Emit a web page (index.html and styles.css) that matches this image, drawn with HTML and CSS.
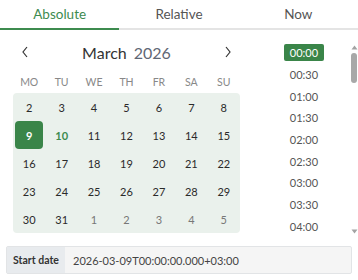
FILE: index.html
```html
<!DOCTYPE html>
<html>
<head>
<meta charset="utf-8">
<link rel="stylesheet" href="styles.css">
</head>
<body>
<div class="picker">
  <div class="tabs">
    <div class="tab active">Absolute</div>
    <div class="tab">Relative</div>
    <div class="tab">Now</div>
  </div>
  <div class="main">
    <div class="cal">
      <div class="cal-head">
        <svg class="arrow" width="6" height="12" viewBox="0 0 6 12"><path d="M5 1 L1 6 L5 11" fill="none" stroke="#333" stroke-width="1.2"/></svg>
        <div class="title"><span class="month">March</span><span class="year">2026</span></div>
        <svg class="arrow" width="6" height="12" viewBox="0 0 6 12"><path d="M1 1 L5 6 L1 11" fill="none" stroke="#333" stroke-width="1.2"/></svg>
      </div>
      <div class="weekdays">
        <span>MO</span><span>TU</span><span>WE</span><span>TH</span><span>FR</span><span>SA</span><span>SU</span>
      </div>
      <div class="days">
        <span>2</span><span>3</span><span>4</span><span>5</span><span>6</span><span>7</span><span>8</span>
        <span class="sel">9</span><span class="today">10</span><span>11</span><span>12</span><span>13</span><span>14</span><span>15</span>
        <span>16</span><span>17</span><span>18</span><span>19</span><span>20</span><span>21</span><span>22</span>
        <span>23</span><span>24</span><span>25</span><span>26</span><span>27</span><span>28</span><span>29</span>
        <span>30</span><span>31</span><span class="other">1</span><span class="other">2</span><span class="other">3</span><span class="other">4</span><span class="other">5</span>
      </div>
    </div>
    <div class="times">
      <div class="time sel"><span>00:00</span></div>
      <div class="time"><span>00:30</span></div>
      <div class="time"><span>01:00</span></div>
      <div class="time"><span>01:30</span></div>
      <div class="time"><span>02:00</span></div>
      <div class="time"><span>02:30</span></div>
      <div class="time"><span>03:00</span></div>
      <div class="time"><span>03:30</span></div>
      <div class="time"><span>04:00</span></div>
    </div>
    <div class="scrollbar">
      <svg width="7" height="5" viewBox="0 0 7 5"><path d="M3.5 0.5 L6.5 4.5 L0.5 4.5 Z" fill="#a3a3a3"/></svg>
      <div class="thumb"></div>
      <div class="track"></div>
      <svg width="7" height="5" viewBox="0 0 7 5"><path d="M0.5 0.5 L6.5 0.5 L3.5 4.5 Z" fill="#a3a3a3"/></svg>
    </div>
  </div>
  <div class="field">
    <div class="label">Start date</div>
    <div class="value">2026-03-09T00:00:00.000+03:00</div>
  </div>
</div>
</body>
</html>
```

FILE: styles.css
```css
* { box-sizing: border-box; }
html, body { margin: 0; padding: 0; background: #fff; }
body {
  font-family: Lato, "Noto Sans", sans-serif;
  color: #222;
  width: 358px;
  height: 280px;
  overflow: hidden;
}
.tabs {
  display: flex;
  height: 30px;
  border-bottom: 2px solid #e4e4e4;
}
.tab {
  flex: 1;
  text-align: center;
  font-size: 13.5px;
  line-height: 28px;
  color: #555;
}
.tab.active {
  color: #3d8b4f;
  border-bottom: 2px solid #3d8b4f;
  margin-bottom: -2px;
}
.main {
  display: flex;
  height: 212px;
}
.cal {
  width: 227px;
  margin-left: 13px;
}
.cal-head {
  display: flex;
  align-items: center;
  justify-content: space-between;
  height: 44px;
  padding: 0 9px 0 9px;
}
.title {
  font-size: 16px;
  color: #333;
}
.year {
  color: #5f6775;
  margin-left: 7px;
}
.weekdays {
  display: grid;
  grid-template-columns: repeat(7, 1fr);
  height: 16px;
  font-size: 10.5px;
  color: #888;
  text-align: center;
  line-height: 16px;
  margin-bottom: 3px;
}
.days {
  display: grid;
  grid-template-columns: repeat(7, 1fr);
  grid-auto-rows: 28px;
  background: #eaf1ec;
  border-radius: 4px;
  font-size: 11px;
  color: #2a2a2a;
}
.days span {
  display: flex;
  align-items: center;
  justify-content: center;
}
.days .other { color: #777; }
.days .today { color: #3d8b4f; font-weight: bold; }
.days .sel {
  background: #3a8549;
  color: #fff;
  font-weight: bold;
  border-radius: 4px;
  margin: 0 2px 0 2px;
}
.times {
  width: 80px;
  margin-left: 24px;
  padding-top: 12px;
  font-size: 11px;
  color: #555;
}
.time {
  height: 21.7px;
  display: flex;
  align-items: center;
  justify-content: center;
}
.time.sel span {
  background: #3a8549;
  color: #fff;
  width: 40px;
  height: 17px;
  line-height: 17px;
  text-align: center;
  border-radius: 2px;
}
.scrollbar {
  width: 14px;
  display: flex;
  flex-direction: column;
  align-items: flex-end;
  padding: 15px 0 8px 0;
}
.scrollbar svg { display: block; }
.thumb {
  width: 6px;
  height: 30px;
  background: #a8a8a8;
  border-radius: 3px;
  margin-top: 3px;
  margin-right: 1px;
}
.track { flex: 1; }
.field {
  display: flex;
  margin: 4px 6px 0 6px;
  height: 28px;
  border: 1px solid #e2e4e6;
  border-radius: 2px;
  background: #f5f5f5;
}
.label {
  width: 58px;
  background: #e8ebee;
  font-size: 10.5px;
  font-weight: bold;
  color: #333;
  display: flex;
  align-items: center;
  justify-content: center;
}
.value {
  padding-left: 8px;
  font-size: 11px;
  color: #444;
  display: flex;
  align-items: center;
}
```
